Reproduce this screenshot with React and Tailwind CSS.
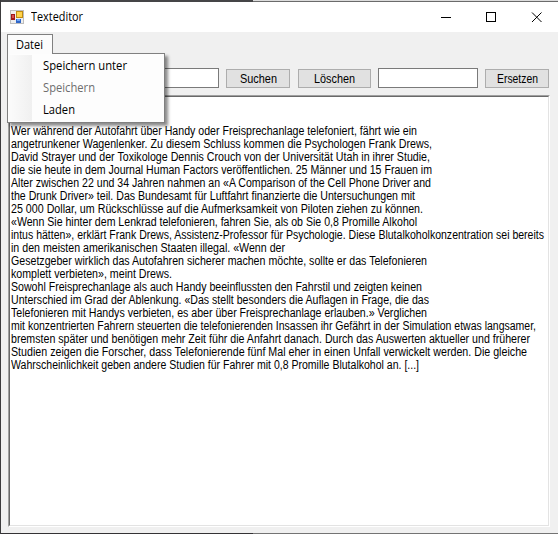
import { useLayoutEffect, useRef } from "react";

// Condenses one line of text so that it takes exactly `w` pixels.
function Fit({ w, children, className = "" }) {
  const ref = useRef(null);
  useLayoutEffect(() => {
    const el = ref.current;
    el.style.transform = "none";
    const natural = el.getBoundingClientRect().width;
    el.style.transform = "scaleX(" + w / natural + ")";
  }, [w, children]);
  return (
    <span className={"block shrink-0 " + className} style={{ width: w }}>
      <span ref={ref} className="inline-block origin-left whitespace-pre">
        {children}
      </span>
    </span>
  );
}

const lines = [
  [406, "Wer während der Autofahrt über Handy oder Freisprechanlage telefoniert, fährt wie ein"],
  [421, "angetrunkener Wagenlenker. Zu diesem Schluss kommen die Psychologen Frank Drews,"],
  [419, "David Strayer und der Toxikologe Dennis Crouch von der Universität Utah in ihrer Studie,"],
  [421, "die sie heute in dem Journal Human Factors veröffentlichen. 25 Männer und 15 Frauen im"],
  [420, "Alter zwischen 22 und 34 Jahren nahmen an «A Comparison of the Cell Phone Driver and"],
  [404, "the Drunk Driver» teil. Das Bundesamt für Luftfahrt finanzierte die Untersuchungen mit"],
  [412, "25 000 Dollar, um Rückschlüsse auf die Aufmerksamkeit von Piloten ziehen zu können."],
  [406, "«Wenn Sie hinter dem Lenkrad telefonieren, fahren Sie, als ob Sie 0,8 Promille Alkohol"],
  [533, "intus hätten», erklärt Frank Drews, Assistenz-Professor für Psychologie. Diese Blutalkoholkonzentration sei bereits"],
  [274, "in den meisten amerikanischen Staaten illegal. «Wenn der"],
  [416, "Gesetzgeber wirklich das Autofahren sicherer machen möchte, sollte er das Telefonieren"],
  [161, "komplett verbieten», meint Drews."],
  [411, "Sowohl Freisprechanlage als auch Handy beeinflussten den Fahrstil und zeigten keinen"],
  [418, "Unterschied im Grad der Ablenkung. «Das stellt besonders die Auflagen in Frage, die das"],
  [416, "Telefonieren mit Handys verbieten, es aber über Freisprechanlage erlauben.» Verglichen"],
  [525, "mit konzentrierten Fahrern steuerten die telefonierenden Insassen ihr Gefährt in der Simulation etwas langsamer,"],
  [519, "bremsten später und benötigen mehr Zeit führ die Anfahrt danach. Durch das Auswerten aktueller und früherer"],
  [516, "Studien zeigen die Forscher, dass Telefonierende fünf Mal eher in einen Unfall verwickelt werden. Die gleiche"],
  [408, "Wahrscheinlichkeit geben andere Studien für Fahrer mit 0,8 Promille Blutalkohol an. [...]"],
];

function AppIcon() {
  return (
    <svg width="14" height="14" viewBox="0 0 14 14" shapeRendering="crispEdges">
      <rect x="0.5" y="0.5" width="13" height="13" fill="#eeeeee" stroke="#bdbdbd" />
      <rect x="1" y="4" width="4" height="6" fill="#a01818" />
      <rect x="2" y="5" width="2" height="3" fill="#d85050" />
      <rect x="6" y="1" width="7" height="7" fill="#c08a10" />
      <rect x="7" y="2" width="5" height="5" fill="#ffd34a" />
      <rect x="6" y="9" width="5" height="4" fill="#2f66c8" />
      <rect x="7" y="9" width="3" height="2" fill="#6fa4f4" />
    </svg>
  );
}

function Button({ className, w, children }) {
  return (
    <button className={"flex h-[19px] items-center justify-center border border-[#adadad] bg-[#e1e1e1] text-left text-[12px] leading-none " + className}>
      <Fit w={w}>{children}</Fit>
    </button>
  );
}

export default function App() {
  return (
    <div className="relative flex h-[534px] w-[558px] flex-col overflow-hidden border-l border-[#3c3b3d] bg-[#f0f0f0] font-['Liberation_Sans',sans-serif] text-black">
      <div className="flex h-[2px] shrink-0">
        <div className="w-[252px] bg-[#454547]" />
        <div className="flex-1 border-b border-[#6b6b6b] bg-[#dcdcdc]" />
      </div>
      <header className="flex h-[30px] shrink-0 items-center bg-white pl-[9px] font-['Open_Sans',sans-serif] text-[12px]">
        <AppIcon />
        <Fit w={52} className="ml-[7px]">Texteditor</Fit>
        <svg className="ml-auto mr-[15px]" width="102" height="11" viewBox="0 0 102 11" fill="none" stroke="#000">
          <path d="M0 5.5h10" />
          <rect x="45.5" y="0.5" width="9" height="9" />
          <path d="M91 0.5l9.5 9.5M100.5 0.5l-9.5 9.5" />
        </svg>
      </header>
      <div className="flex h-[56px] shrink-0 items-end pl-[8px]">
        <div className="h-[20px] w-[210px] border border-[#7a7a7a] bg-white" />
        <Button className="ml-[7px] w-[64px]" w={37}>Suchen</Button>
        <Button className="ml-[8px] w-[73px]" w={41}>Löschen</Button>
        <div className="ml-[7px] h-[20px] w-[100px] border border-[#7a7a7a] bg-white" />
        <Button className="ml-[7px] w-[64px]" w={41}>Ersetzen</Button>
      </div>
      <main className="ml-[7px] mt-[7px] h-[432px] w-[542px] border border-b-white border-l-[#a0a0a0] border-r-white border-t-[#a0a0a0]">
        <div className="h-full border border-b-[#e3e3e3] border-l-[#696969] border-r-[#e3e3e3] border-t-[#696969] bg-white pl-px pt-[28px] text-[12px] leading-[13px]">
          {lines.map(([w, t]) => (
            <div key={t} className="h-[13px] whitespace-nowrap">
              <Fit w={w}>{t}</Fit>
            </div>
          ))}
        </div>
      </main>
      <div className="absolute inset-x-0 bottom-0 flex h-px">
        <div className="w-[252px] bg-[#343235]" />
        <div className="flex-1 bg-[#737373]" />
      </div>
      <nav className="absolute left-[6px] top-[34px] font-['Open_Sans',sans-serif] text-[12px]">
        <div className="relative z-10 flex h-[20px] w-[46px] items-center border border-b-0 border-[#808080] bg-[#fcfcfc] pl-[8px]">
          <Fit w={27}>Datei</Fit>
        </div>
        <div className="-mt-px flex h-[70px] w-[158px] border border-[#808080] bg-[#fdfdfd] p-px shadow-[3px_3px_3px_rgba(0,0,0,0.45)]">
          <div className="w-[23px] bg-linear-to-r from-[#fbfbfb] to-[#f0f0f0]" />
          <div className="flex flex-col pl-[11px]">
            <div className="flex h-[22px] items-center"><Fit w={84}>Speichern unter</Fit></div>
            <div className="flex h-[22px] items-center text-[#6d6d6d]"><Fit w={52}>Speichern</Fit></div>
            <div className="flex h-[22px] items-center"><Fit w={32}>Laden</Fit></div>
          </div>
        </div>
      </nav>
    </div>
  );
}
